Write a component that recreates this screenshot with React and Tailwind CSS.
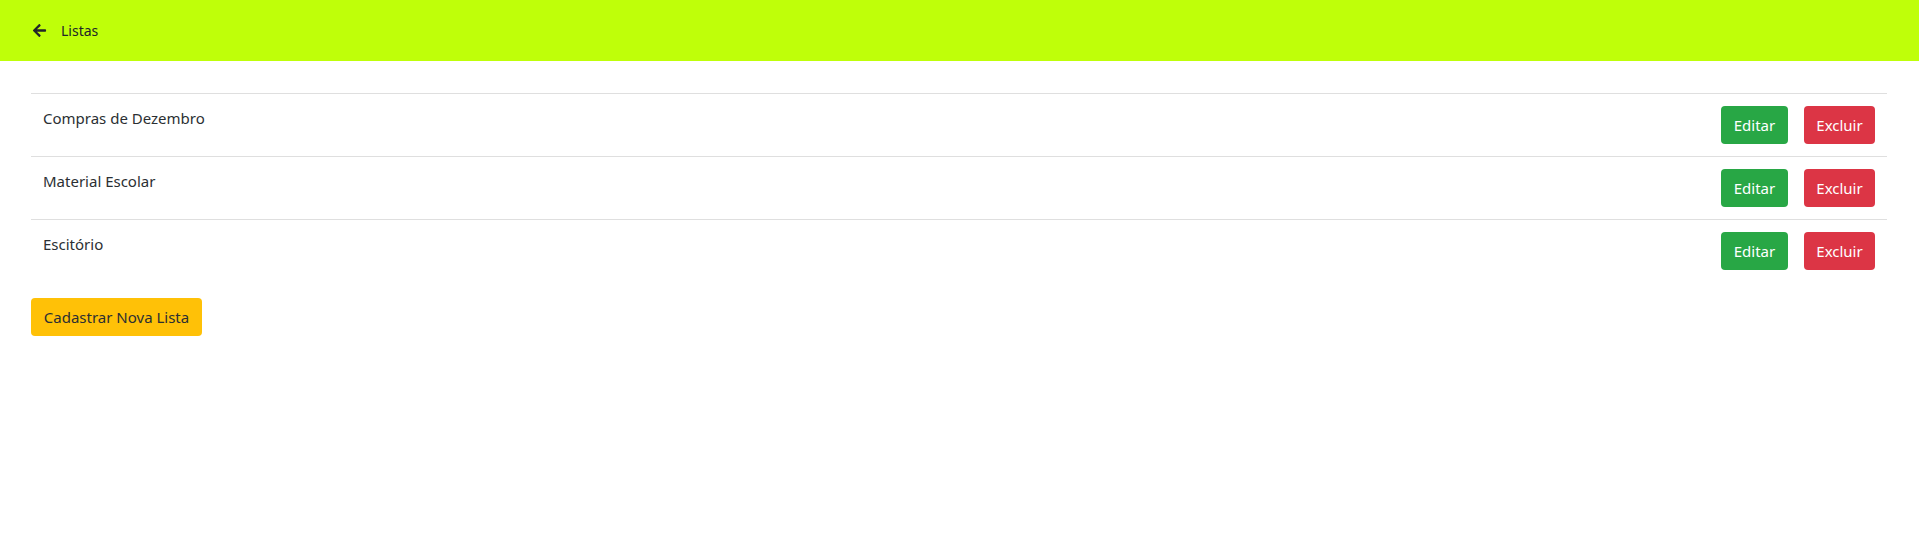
import { FaArrowLeft } from "react-icons/fa";

const lists = ["Compras de Dezembro", "Material Escolar", "Escitório"];

export default function App() {
  return (
    <div
      className="min-h-screen bg-white text-[#212529] text-[15px]"
      style={{ fontFamily: '"Segoe UI", "Noto Sans", "Open Sans", sans-serif' }}
    >
      {/* HEADER */}
      <header className="h-[61px] bg-[#bfff09] flex items-center pl-8">
        <FaArrowLeft className="w-[15px] h-[15px] text-[#212529]" />
        <span className="ml-[14px] text-[14px]">Listas</span>
      </header>

      <main className="pl-[31px] pr-[32px] pt-8">
        <ul>
          {lists.map((name) => (
            <li
              key={name}
              className="border-t border-[#dfdfdf] px-3 py-3 flex justify-between items-start"
            >
              <span className="leading-6 text-[#2b2f33]">{name}</span>
              <div className="flex gap-4">
                <button className="h-[38px] w-[67px] rounded bg-[#28a745] text-white leading-6">
                  Editar
                </button>
                <button className="h-[38px] w-[71px] rounded bg-[#dc3545] text-white leading-6">
                  Excluir
                </button>
              </div>
            </li>
          ))}
        </ul>

        <button className="mt-4 h-[38px] w-[171px] rounded bg-[#ffc107] text-[#2b2f33] leading-6">
          Cadastrar Nova Lista
        </button>
      </main>
    </div>
  );
}
